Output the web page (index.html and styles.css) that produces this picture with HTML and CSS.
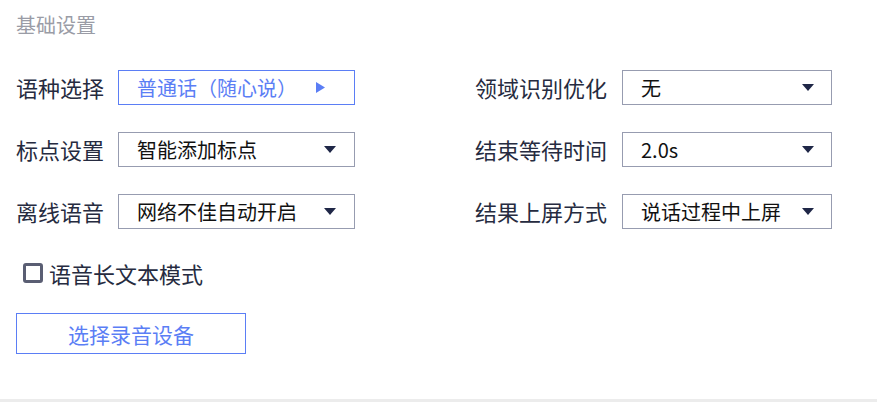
FILE: index.html
```html
<!DOCTYPE html>
<html lang="zh-CN">
<head>
<meta charset="utf-8">
<title>基础设置</title>
<link rel="stylesheet" href="styles.css">
</head>
<body>
<div class="panel">
  <div class="title">基础设置</div>
  <div class="rows">
    <div class="row">
      <div class="field left">
        <span class="label">语种选择</span>
        <div class="box box-blue">
          <span class="value">普通话（随心说）</span>
          <svg class="arrow-right" width="9" height="11" viewBox="0 0 9 11"><path d="M0 0 L9 5.5 L0 11 Z" fill="#5b7ef5"/></svg>
        </div>
      </div>
      <div class="field right">
        <span class="label">领域识别优化</span>
        <div class="box box-gray">
          <span class="value">无</span>
          <svg class="arrow-down" width="12" height="8" viewBox="0 0 12 8"><path d="M0 0 L12 0 L6 7 Z" fill="#1f2747"/></svg>
        </div>
      </div>
    </div>
    <div class="row">
      <div class="field left">
        <span class="label">标点设置</span>
        <div class="box box-gray">
          <span class="value">智能添加标点</span>
          <svg class="arrow-down" width="12" height="8" viewBox="0 0 12 8"><path d="M0 0 L12 0 L6 7 Z" fill="#1f2747"/></svg>
        </div>
      </div>
      <div class="field right">
        <span class="label">结束等待时间</span>
        <div class="box box-gray">
          <span class="value">2.0s</span>
          <svg class="arrow-down" width="12" height="8" viewBox="0 0 12 8"><path d="M0 0 L12 0 L6 7 Z" fill="#1f2747"/></svg>
        </div>
      </div>
    </div>
    <div class="row">
      <div class="field left">
        <span class="label">离线语音</span>
        <div class="box box-gray">
          <span class="value">网络不佳自动开启</span>
          <svg class="arrow-down" width="12" height="8" viewBox="0 0 12 8"><path d="M0 0 L12 0 L6 7 Z" fill="#1f2747"/></svg>
        </div>
      </div>
      <div class="field right">
        <span class="label">结果上屏方式</span>
        <div class="box box-gray">
          <span class="value">说话过程中上屏</span>
          <svg class="arrow-down" width="12" height="8" viewBox="0 0 12 8"><path d="M0 0 L12 0 L6 7 Z" fill="#1f2747"/></svg>
        </div>
      </div>
    </div>
  </div>
  <label class="check">
    <span class="checkbox"></span>
    <span class="check-text">语音长文本模式</span>
  </label>
  <button class="btn">选择录音设备</button>
</div>
</body>
</html>
```

FILE: styles.css
```css
html, body {
  margin: 0;
  padding: 0;
  background: #ffffff;
}
body {
  width: 877px;
  height: 402px;
  overflow: hidden;
  font-family: "Noto Sans CJK SC", "Noto Sans", sans-serif;
  color: #262b40;
}
.panel {
  height: 399px;
  border-bottom: 3px solid #ececec;
  padding-left: 16px;
  box-sizing: content-box;
}
.title {
  padding-top: 11px;
  height: 28px;
  font-size: 20px;
  line-height: 28px;
  color: #9a9ca6;
}
.rows {
  margin-top: 31px;
  display: flex;
  flex-direction: column;
  gap: 27px;
}
.row {
  display: flex;
  height: 35px;
}
.field {
  display: flex;
  align-items: center;
}
.field.left {
  width: 459px;
}
.label {
  font-size: 22px;
  line-height: 35px;
  color: #262b40;
  white-space: nowrap;
}
.left .label {
  width: 102px;
}
.right .label {
  width: 147px;
}
.box {
  height: 35px;
  box-sizing: border-box;
  display: flex;
  align-items: center;
  justify-content: space-between;
  padding-left: 18px;
  white-space: nowrap;
}
.left .box {
  width: 237px;
  padding-right: 18px;
}
.right .box {
  width: 210px;
  padding-right: 17px;
}
.box-blue {
  border: 1px solid #5b7ef5;
  padding-right: 29px !important;
}
.box-blue .value {
  color: #5b7ef5;
  font-size: 20px;
}
.box-gray {
  border: 1px solid #979cb0;
}
.value {
  font-size: 20px;
  line-height: 33px;
  color: #111111;
}
.arrow-down, .arrow-right {
  flex: none;
  display: block;
}
.check {
  display: flex;
  align-items: center;
  margin-top: 31px;
  margin-left: 7px;
  height: 26px;
}
.checkbox {
  width: 20px;
  height: 20px;
  box-sizing: border-box;
  border: 3px solid #5a5e73;
  border-radius: 3px;
  flex: none;
}
.check-text {
  margin-left: 6px;
  font-size: 22px;
  line-height: 26px;
  color: #262b40;
}
.btn {
  display: block;
  margin-top: 27px;
  width: 230px;
  height: 41px;
  border: 1px solid #5b7ef5;
  background: #ffffff;
  color: #5b7ef5;
  font-family: "Noto Sans CJK SC", "Noto Sans", sans-serif;
  font-size: 21px;
  padding: 0;
  cursor: pointer;
}
```
